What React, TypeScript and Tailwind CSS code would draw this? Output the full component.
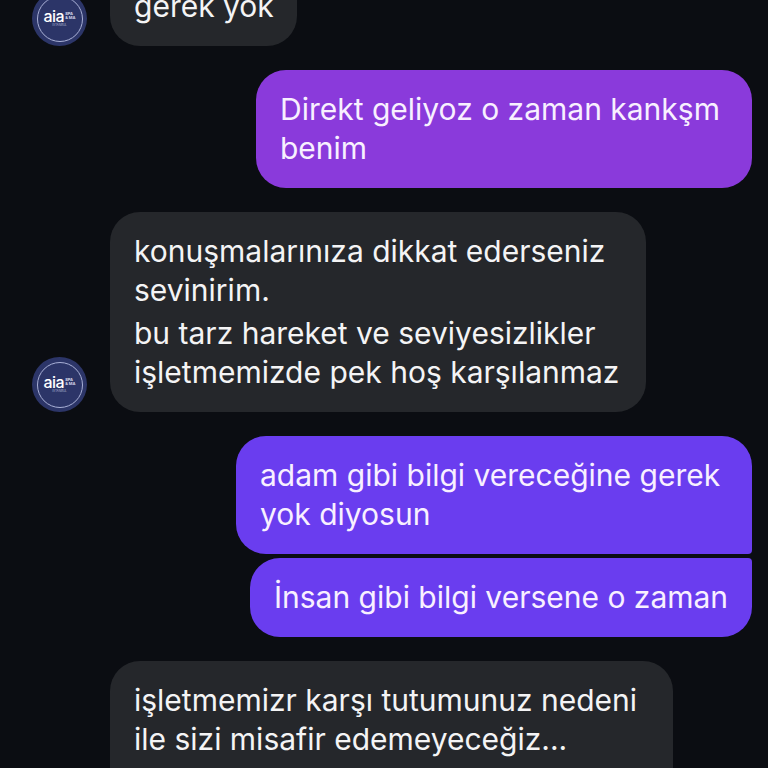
function Avatar() {
  return (
    <div className="w-[55px] h-[55px] shrink-0 rounded-full bg-[#2c3568] flex items-center justify-center">
      <div className="w-[46px] h-[46px] rounded-full border border-[#a9b0d6] flex flex-col items-center justify-center">
        <div className="flex items-center gap-[1px] -mt-[1px]">
          <span className="text-[16px] leading-[14px] font-medium tracking-[-0.5px] text-white">aia</span>
          <span className="flex flex-col text-[4px] leading-[4px] font-bold text-[#d5d8ea]">
            <span>SPA</span>
            <span>&amp; MA</span>
          </span>
        </div>
        <span className="text-[3px] leading-[3px] mt-[1px] text-[#aab0d0]">ISTANBUL</span>
      </div>
    </div>
  )
}

function Incoming({
  lines,
  width,
  className = '',
  noAvatar = false,
}: {
  lines: string[][]
  width: string
  className?: string
  noAvatar?: boolean
}) {
  return (
    <div className={`flex items-end gap-[23px] pl-8 ${className}`}>
      {noAvatar ? <div className="w-[55px] shrink-0" /> : <Avatar />}
      <div className={`${width} bg-[#25272b] text-[#f4f4f5] rounded-[30px] px-6 py-5 flex flex-col gap-1`}>
        {lines.map((para, i) => (
          <p key={i}>
            {para.map(l => <span key={l} className="block whitespace-nowrap">{l}</span>)}
          </p>
        ))}
      </div>
    </div>
  )
}

export default function App() {
  return (
    <div className="w-[768px] h-[768px] overflow-hidden bg-[#0b0d12] text-[#f8f0ff] text-[30px] leading-[39px] font-['Inter',sans-serif]">
      <div className="flex flex-col -mt-[33px]">
        <Incoming width="w-[187px]" lines={[['gerek yok']]} />

        <div className="flex justify-end pr-4 mt-6">
          <div className="w-[496px] bg-[#8a3adb] rounded-[30px] px-6 py-5">
            <span className="block whitespace-nowrap">Direkt geliyoz o zaman kankşm</span>
            <span className="block">benim</span>
          </div>
        </div>

        <Incoming
          className="mt-6"
          width="w-[536px]"
          lines={[
            ['konuşmalarınıza dikkat ederseniz', 'sevinirim.'],
            ['bu tarz hareket ve seviyesizlikler', 'işletmemizde pek hoş karşılanmaz'],
          ]}
        />

        <div className="flex flex-col items-end gap-1 pr-4 mt-6">
          <div className="w-[516px] bg-[#6a3def] rounded-[30px] rounded-br-[4px] px-6 py-5">
            <span className="block whitespace-nowrap">adam gibi bilgi vereceğine gerek</span>
            <span className="block">yok diyosun</span>
          </div>
          <div className="w-[502px] bg-[#6a3def] rounded-[30px] rounded-tr-[4px] px-6 py-5">
            <span className="block whitespace-nowrap">İnsan gibi bilgi versene o zaman</span>
          </div>
        </div>

        {/* bubble runs past the bottom of the shot, avatar would sit below the fold */}
        <Incoming
          className="mt-6"
          noAvatar
          width="w-[563px] h-[180px]"
          lines={[['işletmemizr karşı tutumunuz nedeni', 'ile sizi misafir edemeyeceğiz...']]}
        />
      </div>
    </div>
  )
}
